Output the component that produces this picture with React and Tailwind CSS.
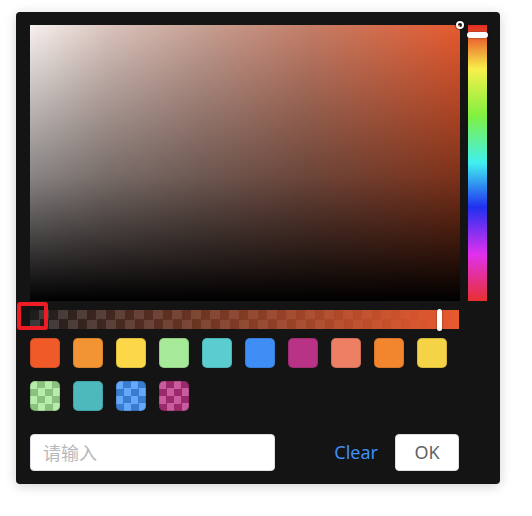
import React, { useState } from 'react';

const swatches = [
  { id: 1, cls: 'bg-[#f05a28]' },
  { id: 2, cls: 'bg-[#f39434]' },
  { id: 3, cls: 'bg-[#fcd849]' },
  { id: 4, cls: 'bg-[#a6e998]' },
  { id: 5, cls: 'bg-[#5acdd0]' },
  { id: 6, cls: 'bg-[#3f8ef5]' },
  { id: 7, cls: 'bg-[#b83286]' },
  { id: 8, cls: 'bg-[#ec7f64]' },
  { id: 9, cls: 'bg-[#f2862f]' },
  { id: 10, cls: 'bg-[#f5d346]' },
  {
    id: 11,
    cls: 'bg-[conic-gradient(#8cc07f_25%,#b5eeaa_0_50%,#8cc07f_0_75%,#b5eeaa_0)] bg-[length:15px_15px]',
  },
  { id: 12, cls: 'bg-[#4eb9bd]' },
  {
    id: 13,
    cls: 'bg-[conic-gradient(#3a7dd0_25%,#64a8fa_0_50%,#3a7dd0_0_75%,#64a8fa_0)] bg-[length:15px_15px]',
  },
  {
    id: 14,
    cls: 'bg-[conic-gradient(#9c2a6b_25%,#c95b9f_0_50%,#9c2a6b_0_75%,#c95b9f_0)] bg-[length:15px_15px]',
  },
];

export default function App() {
  const [value, setValue] = useState('');

  return (
    <div className="min-h-screen bg-white pt-3 pl-4 font-['Noto_Sans','Noto_Sans_CJK_SC',sans-serif]">
      <div className="relative w-[484px] rounded-[4px] bg-[#141414] pt-[13px] pr-[13px] pb-[13px] pl-[14px] shadow-[0_2px_12px_rgba(0,0,0,0.18)]">
        {/* saturation + hue */}
        <div className="flex gap-2">
          <div className="relative h-[276px] flex-1 bg-[linear-gradient(to_top,#000,rgba(0,0,0,0.45)_45%,transparent),linear-gradient(to_right,#f8f1ef,#dac4bd_18%,#c79f93_40%,#c47d67_65%,#e65a2e)]">
            <div className="absolute -right-[4px] -top-[4px] h-[8px] w-[8px] rounded-full border-2 border-white shadow-[0_0_1px_1px_rgba(0,0,0,0.5)]" />
          </div>
          <div className="relative h-[276px] w-[19px] bg-[linear-gradient(to_bottom,#e42a22,#f8f04a_16%,#80f040_33%,#40f0f0_50%,#2030f0_66%,#e030f0_83%,#e83030)]">
            <div className="absolute -left-[1px] top-[7px] h-[6px] w-[21px] rounded-full bg-white shadow-[0_0_2px_rgba(0,0,0,0.5)]" />
          </div>
        </div>

        {/* alpha */}
        <div className="relative mt-[9px] mr-[28px] h-[19px] bg-[conic-gradient(#3a3a3a_25%,#1c1c1c_0_50%,#3a3a3a_0_75%,#1c1c1c_0)] bg-[length:19px_19px]">
          <div className="h-full w-full bg-[linear-gradient(to_right,transparent,#e85a2e)]" />
          <div className="absolute left-[407px] -top-[1px] h-[22px] w-[5px] rounded-full bg-white shadow-[0_0_2px_rgba(0,0,0,0.5)]" />
        </div>
        <div className="absolute left-[1px] top-[290px] h-[28px] w-[31px] rounded-[3px] border-[4px] border-[#ee1c25]" />

        {/* presets */}
        <div className="mt-[9px] grid w-[417px] grid-cols-[repeat(10,30px)] gap-x-[13px] gap-y-[13px]">
          {swatches.map((s) => (
            <div
              key={s.id}
              className={`h-[30px] w-[30px] rounded-[5px] shadow-[inset_0_0_0_1px_rgba(0,0,0,0.12)] ${s.cls}`}
            />
          ))}
        </div>

        {/* footer */}
        <div className="mt-[23px] flex items-center">
          <input
            placeholder="请输入"
            type="text"
            value={value}
            onChange={(e) => setValue(e.target.value)}
            className="h-[37px] w-[245px] rounded-[4px] border border-[#dcdfe6] bg-white px-3 text-[18px] text-[#606266] outline-none placeholder:text-[#b8b9bd]"
          />
          <button className="ml-auto mr-[17px] text-[18px] text-[#3f8ef5]">
            Clear
          </button>
          <button className="mr-[28px] h-[37px] w-[64px] rounded-[4px] border border-[#dcdfe6] bg-white text-[18px] text-[#606266]">
            OK
          </button>
        </div>
      </div>
    </div>
  );
}
